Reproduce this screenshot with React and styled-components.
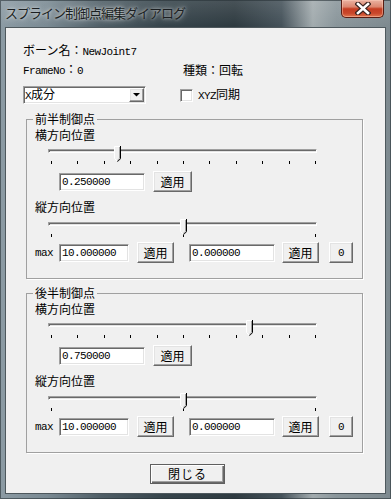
import React from "react";
import styled, { createGlobalStyle } from "styled-components";

const Global = createGlobalStyle`
  html, body { margin: 0; padding: 0; background: #7d8a91; }
  * { box-sizing: border-box; }
`;

const UI_FONT = `"Noto Sans CJK JP", "Noto Sans", sans-serif`;
const MONO_FONT = `"Liberation Mono", "Noto Sans CJK JP", monospace`;

const Window = styled.div`
  width: 391px;
  height: 499px;
  padding: 0 5px 5px;
  display: flex;
  flex-direction: column;
  background:
    linear-gradient(180deg, rgba(255,255,255,0.12) 0px, rgba(255,255,255,0) 26px),
    linear-gradient(90deg, #8c9ba4 0%, #7a8a93 12%, #4f5e66 26%, #36444b 42%, #2f3b41 60%, #45525a 72%, #a2abae 80%, #8a969b 86%, #7d898f 100%);
  box-shadow: inset 0 0 0 1px rgba(40, 50, 55, 0.6);
`;

const TitleBar = styled.div`
  flex: none;
  height: 27px;
  display: flex;
  justify-content: space-between;
  align-items: flex-start;
`;

const Title = styled.div`
  margin-top: 6px;
  font-family: ${UI_FONT};
  font-size: 13px;
  letter-spacing: -1px;
  line-height: 14px;
  color: #1b1f22;
  white-space: nowrap;
  text-shadow: 0 0 6px rgba(255, 255, 255, 0.75), 0 0 3px rgba(255, 255, 255, 0.6);
`;

const CloseBtn = styled.div`
  width: 43px;
  height: 18px;
  margin-right: 2px;
  display: flex;
  align-items: center;
  justify-content: center;
  border: 1px solid #5a1c12;
  border-top: none;
  border-radius: 0 0 5px 5px;
  background: linear-gradient(180deg, #eab2a2 0%, #dc8770 40%, #c53d22 52%, #c9472b 78%, #e0764f 100%);
  box-shadow: inset 0 0 0 1px rgba(255, 210, 190, 0.45);
`;

const Client = styled.div`
  flex: 1;
  border: 1px solid #4e585d;
  background: #f0f0f0;
  padding: 15px 0 0 17px;
  display: flex;
  flex-direction: column;
  align-items: flex-start;
  font-family: ${UI_FONT};
  font-size: 12px;
  line-height: 14px;
  color: #000;
`;

const monoText = `
  font-family: ${MONO_FONT};
  font-size: 11px;
  letter-spacing: -0.6px;
`;

const Mono = styled.span`
  ${monoText}
`;

const InfoLine = styled.div`
  height: 14px;
  white-space: nowrap;
`;

const InfoGrid = styled.div`
  display: grid;
  grid-template-columns: ${(p) => p.$first}px auto;
  align-items: center;
  margin-top: ${(p) => p.$mt}px;
  white-space: nowrap;
`;

const sunken = `
  border: 1px solid;
  border-color: #a0a0a0 #ffffff #ffffff #a0a0a0;
  box-shadow: inset 1px 1px 0 #696969, inset -1px -1px 0 #e3e3e3;
  background: #ffffff;
`;

const raised = `
  border: 1px solid;
  border-color: #ffffff #696969 #696969 #ffffff;
  box-shadow: inset -1px -1px 0 #a0a0a0, inset 1px 1px 0 #e3e3e3;
  background: #f0f0f0;
`;

const Combo = styled.div`
  ${sunken}
  width: 123px;
  height: 18px;
  display: flex;
  align-items: center;
  justify-content: space-between;
  padding: 0 1px 0 1px;
`;

const ComboText = styled.span`
  line-height: 14px;
`;

const DropBtn = styled.div`
  ${raised}
  width: 15px;
  height: 14px;
  display: flex;
  align-items: center;
  justify-content: center;
`;

const CheckRow = styled.label`
  display: flex;
  align-items: center;
  gap: 5px;
`;

const CheckBox = styled.span`
  ${sunken}
  width: 13px;
  height: 13px;
  display: inline-block;
`;

const Group = styled.fieldset`
  width: 337px;
  height: 167px;
  margin: ${(p) => p.$mt}px 0 0 3px;
  padding: 0 0 0 8px;
  border: 1px solid #a0a0a0;
  box-shadow: 1px 1px 0 #ffffff;
  min-width: 0;
  display: flex;
  flex-direction: column;
  align-items: flex-start;
`;

const Legend = styled.legend`
  padding: 0 2px;
  margin-left: -2px;
  line-height: 14px;
  font-size: 12px;
`;

const Label = styled.div`
  height: 14px;
  margin-top: ${(p) => p.$mt}px;
  white-space: nowrap;
`;

const SliderBox = styled.div`
  position: relative;
  width: 269px;
  height: 21px;
  margin: ${(p) => p.$mt}px 0 0 13px;
`;

const Groove = styled.div`
  margin-top: 6px;
  height: 4px;
  border-top: 1px solid #a0a0a0;
  border-left: 1px solid #a0a0a0;
  border-bottom: 1px solid #ffffff;
  border-right: 1px solid #ffffff;
  background: #e3e3e3;
  box-shadow: inset 1px 1px 0 #696969;
`;

const Ticks = styled.div`
  width: 265px;
  height: 3px;
  margin: 8px 0 0 3px;
  display: flex;
  justify-content: space-between;
`;

const Tick = styled.span`
  width: 1px;
  height: 3px;
  background: #000;
`;

const Thumb = styled.svg`
  position: absolute;
  top: 3px;
  display: block;
`;

const Row = styled.div`
  display: flex;
  align-items: center;
  height: 21px;
  margin-top: ${(p) => p.$mt}px;
`;

const MaxLabel = styled.span`
  width: 24px;
  ${monoText}
`;

const TextBox = styled.input`
  ${sunken}
  width: ${(p) => p.$w}px;
  height: 18px;
  margin: 0 0 0 ${(p) => p.$ml}px;
  padding: 0 0 0 2px;
  ${monoText}
  color: #000;
  outline: none;
`;

const Button = styled.button`
  ${raised}
  width: ${(p) => p.$w}px;
  height: 21px;
  margin: 0 0 0 ${(p) => p.$ml}px;
  padding: 0;
  font-family: ${UI_FONT};
  font-size: 12px;
  line-height: 14px;
  color: #000;
`;

const ButtonMono = styled(Button)`
  ${monoText}
`;

const DefaultButton = styled.button`
  width: 75px;
  height: 20px;
  margin: 11px 0 0 127px;
  padding: 0;
  border: 1px solid #5f5f5f;
  background: #f0f0f0;
  box-shadow: inset 1px 1px 0 #ffffff, inset -1px -1px 0 #696969, inset -2px -2px 0 #a0a0a0;
  font-family: ${UI_FONT};
  font-size: 12px;
  line-height: 14px;
  letter-spacing: 1px;
  color: #000;
`;

function Slider({ value, ticks, mt }) {
  const left = 3 + value * 264 - 3;
  return (
    <SliderBox $mt={mt}>
      <Groove />
      <Ticks>
        {Array.from({ length: ticks }).map((_, i) => (
          <Tick key={i} />
        ))}
      </Ticks>
      <Thumb width="7" height="16" viewBox="0 0 7 16" style={{ left }}>
        <polygon points="0,0 7,0 7,12.5 3.5,16 0,12.5" fill="#f0f0f0" />
        <path d="M0.5 12.5V0.5H6" stroke="#ffffff" fill="none" />
        <path d="M0.5 12.5L3.5 15.5" stroke="#ffffff" fill="none" />
        <path d="M5.5 1V12.3L3.2 14.6" stroke="#a0a0a0" fill="none" />
        <path d="M6.5 0V12.7L3.5 15.7" stroke="#000000" fill="none" />
      </Thumb>
    </SliderBox>
  );
}

function ControlGroup({ title, hValue, hText, vValue, mt }) {
  return (
    <Group $mt={mt}>
      <Legend>{title}</Legend>
      <Label $mt={2}>横方向位置</Label>
      <Slider value={hValue} ticks={11} mt={1} />
      <Row $mt={7}>
        <TextBox $w={86} $ml={24} readOnly value={hText} />
        <Button $w={39} $ml={8}>適用</Button>
      </Row>
      <Label $mt={8}>縦方向位置</Label>
      <Slider value={vValue} ticks={3} mt={2} />
      <Row $mt={5}>
        <MaxLabel>max</MaxLabel>
        <TextBox $w={70} $ml={0} readOnly value="10.000000" />
        <Button $w={37} $ml={8}>適用</Button>
        <TextBox $w={86} $ml={15} readOnly value="0.000000" />
        <Button $w={37} $ml={7}>適用</Button>
        <ButtonMono $w={24} $ml={10}>0</ButtonMono>
      </Row>
    </Group>
  );
}

export default function App() {
  return (
    <>
      <Global />
      <Window>
        <TitleBar>
          <Title>スプライン制御点編集ダイアログ</Title>
          <CloseBtn>
            <svg width="16" height="13" viewBox="0 0 16 13">
              <path d="M3 2L13 11M13 2L3 11" stroke="#3b2420" strokeWidth="5" strokeLinecap="square" />
              <path d="M3 2L13 11M13 2L3 11" stroke="#ffffff" strokeWidth="2.6" strokeLinecap="square" />
            </svg>
          </CloseBtn>
        </TitleBar>
        <Client>
          <InfoLine>
            ボーン名：<Mono>NewJoint7</Mono>
          </InfoLine>
          <InfoGrid $first={160} $mt={5}>
            <span>
              <Mono>FrameNo</Mono>：<Mono>0</Mono>
            </span>
            <span>種類：回転</span>
          </InfoGrid>
          <InfoGrid $first={157} $mt={8}>
            <Combo>
              <ComboText>
                <Mono>X</Mono>成分
              </ComboText>
              <DropBtn>
                <svg width="7" height="4" viewBox="0 0 7 4">
                  <polygon points="0,0 7,0 3.5,3.5" fill="#000" />
                </svg>
              </DropBtn>
            </Combo>
            <CheckRow>
              <CheckBox />
              <span>
                <Mono>XYZ</Mono>同期
              </span>
            </CheckRow>
          </InfoGrid>
          <ControlGroup title="前半制御点" hValue={0.25} hText="0.250000" vValue={0.5} mt={8} />
          <ControlGroup title="後半制御点" hValue={0.75} hText="0.750000" vValue={0.5} mt={7} />
          <DefaultButton>閉じる</DefaultButton>
        </Client>
      </Window>
    </>
  );
}
